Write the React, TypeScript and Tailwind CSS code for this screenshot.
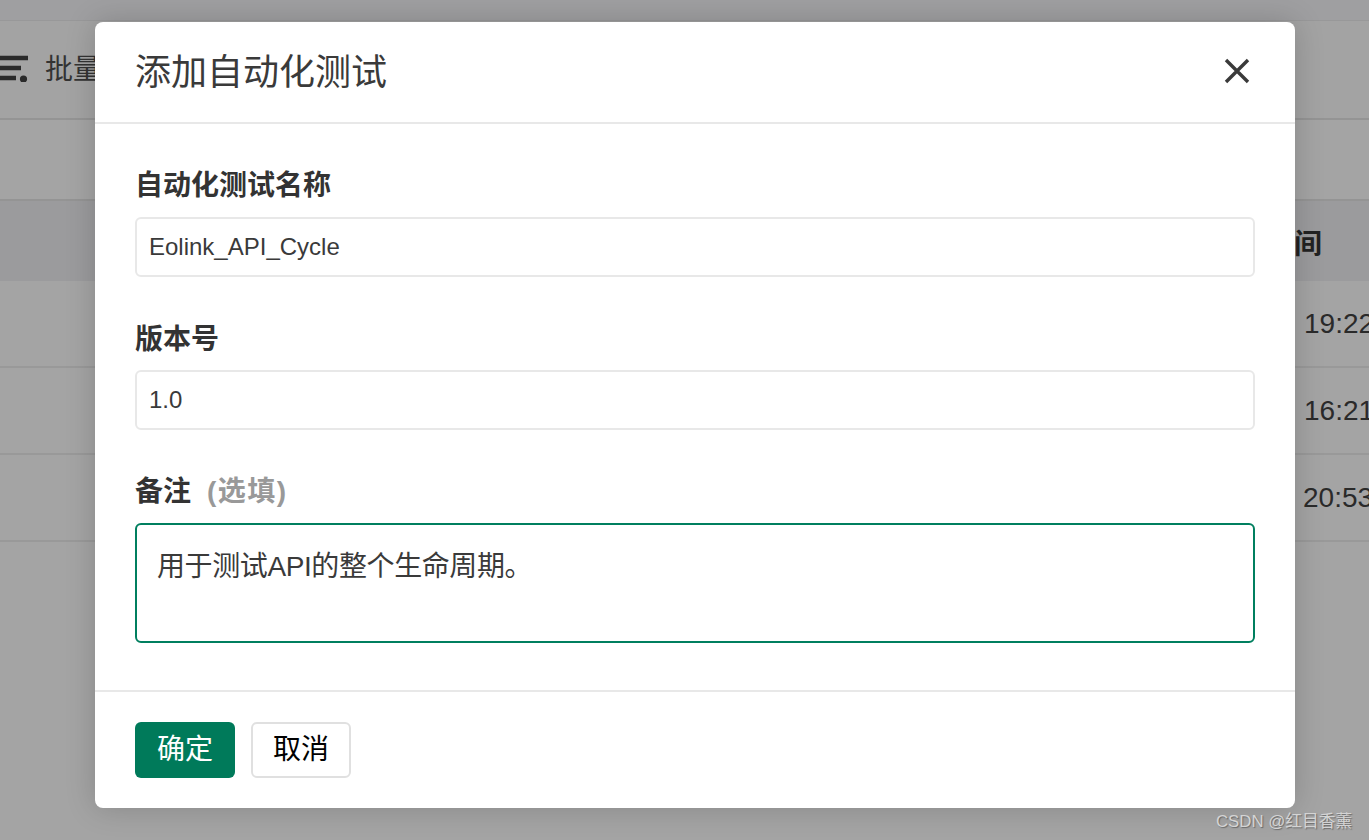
const font = "font-['Liberation_Sans','Noto_Sans_CJK_SC',sans-serif]";

const rows = [
  { id: 'a', time: '19:22', pad: 'pl-[1304px]' },
  { id: 'b', time: '16:21', pad: 'pl-[1304px]' },
  { id: 'c', time: '20:53', pad: 'pl-[1303px]' },
];

const Backdrop = () => (
  <div className="h-[840px] overflow-hidden bg-[#a4a4a4] text-[#222] whitespace-nowrap">
    <div className="h-[21px] bg-[#9f9fa1] border-b border-[#989899]" />
    {/* toolbar */}
    <div className="h-[99px] flex items-center border-b-2 border-[#949494] bg-[#a3a3a3]">
      <svg width="30" height="28" viewBox="0 0 30 28" className="shrink-0 mt-[-3px]">
        <path d="M0 4h28M0 14h21M0 24h16" stroke="#2a2a2a" strokeWidth="4.4" fill="none" />
        <circle cx="23.5" cy="25" r="3.6" fill="#2a2a2a" />
      </svg>
      <span className="ml-[15px] text-[28px] leading-none text-[#333]">批量操作</span>
    </div>
    <div className="h-[81px] border-b-2 border-[#949494] bg-[#a4a4a4]" />
    {/* table head */}
    <div className="h-[80px] bg-[#9b9b9d] flex items-center justify-end pr-[47px] pt-[8px] text-[28px] font-bold text-[#222]">
      时间
    </div>
    {rows.map((row) => (
      <div
        key={row.id}
        className={`h-[87px] flex items-center border-b-2 border-[#999] text-[28px] text-[#2a2a2a] ${row.pad}`}
      >
        {row.time}
      </div>
    ))}
  </div>
);

const inputClass =
  "block w-full h-[60px] px-[12px] border-2 border-[#e8e8e8] rounded-[6px] bg-white text-[24px] text-[#3a3a3a] outline-none";

export default function App() {
  return (
    <div className={`relative ${font}`}>
      <Backdrop />

      {/* modal */}
      <div className="absolute top-[22px] left-[95px] w-[1200px] h-[786px] bg-white rounded-[8px] shadow-[0_0_30px_rgba(0,0,0,0.18)] flex flex-col">
        <div className="h-[102px] shrink-0 flex items-center justify-between pl-[40px] pr-[44px] border-b-2 border-[#e8e8e8]">
          <h2 className="text-[36px] leading-none text-[#3a3a3a] pt-[2px]">添加自动化测试</h2>
          <svg width="28" height="28" viewBox="0 0 28 28" className="mt-[-3px]">
            <path d="M3 3l22 22M25 3L3 25" stroke="#3a3a3a" strokeWidth="3.4" fill="none" />
          </svg>
        </div>

        <div className="flex-1 px-[40px] pt-[44px]">
          <label className="block text-[28px] leading-[36px] font-bold text-[#333] mb-[13px]">自动化测试名称</label>
          <input className={inputClass} defaultValue="Eolink_API_Cycle" />

          <label className="block text-[28px] leading-[36px] font-bold text-[#333] mt-[45px] mb-[12px]">版本号</label>
          <input className={inputClass} defaultValue="1.0" />

          <label className="block text-[28px] leading-[36px] font-bold text-[#333] mt-[44px] mb-[13px]">
            备注<span className="ml-[16px] text-[#999] tracking-[1.5px]">(选填)</span>
          </label>
          <textarea
            className="block w-full h-[120px] px-[20px] pt-[22px] pb-[18px] border-2 border-[#007f5f] rounded-[6px] bg-white text-[28px] leading-[40px] tracking-[-0.4px] text-[#3a3a3a] outline-none resize-none"
            defaultValue="用于测试API的整个生命周期。"
          />
        </div>

        <div className="h-[118px] shrink-0 flex items-start gap-[16px] px-[40px] pt-[30px] border-t-2 border-[#e8e8e8]">
          <button className="w-[100px] h-[56px] rounded-[6px] bg-[#007a5a] text-white text-[28px]">确定</button>
          <button className="w-[100px] h-[56px] rounded-[6px] border-2 border-[#e0e0e0] bg-white text-black text-[28px]">取消</button>
        </div>
      </div>

      {/* watermark */}
      <span className="absolute left-[1216px] top-[810px] text-[16.8px] leading-[24px] text-[#d4d4d4] [text-shadow:1px_1px_1px_rgba(70,70,70,0.6)]">
        CSDN @红目香薰
      </span>
    </div>
  );
}
